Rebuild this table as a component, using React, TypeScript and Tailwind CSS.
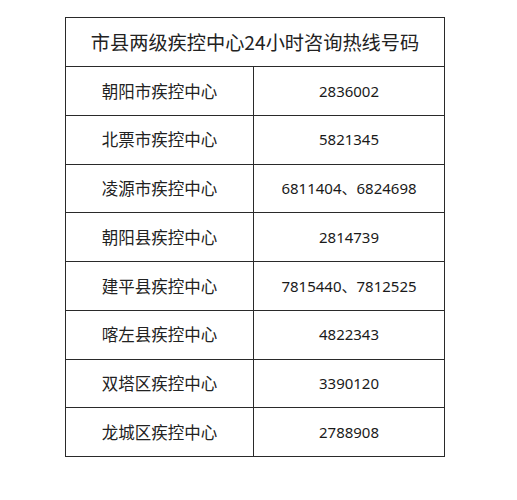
const rows = [
  { name: "朝阳市疾控中心", phone: "2836002" },
  { name: "北票市疾控中心", phone: "5821345" },
  { name: "凌源市疾控中心", phone: "6811404、6824698" },
  { name: "朝阳县疾控中心", phone: "2814739" },
  { name: "建平县疾控中心", phone: "7815440、7812525" },
  { name: "喀左县疾控中心", phone: "4822343" },
  { name: "双塔区疾控中心", phone: "3390120" },
  { name: "龙城区疾控中心", phone: "2788908" },
];

export default function App() {
  return (
    <div className="w-[517px] h-[500px] bg-white pl-[65px] pt-[17px]">
      <div className="w-[380px] border-[1.5px] border-[#2a2a2a] text-[#222]">
        <div
          className="h-[48px] flex items-center justify-center text-[19.2px]"
          style={{ fontFamily: '"Noto Sans CJK SC", sans-serif' }}
        >
          市县两级疾控中心24小时咨询热线号码
        </div>
        {rows.map((r) => (
          <div key={r.name} className="flex h-[48.75px] border-t-[1.5px] border-[#2a2a2a]">
            <div
              className="w-[188px] flex items-center justify-center text-[16.5px] border-r-[1.5px] border-[#2a2a2a]"
              style={{ fontFamily: '"Noto Sans CJK SC", sans-serif' }}
            >
              {r.name}
            </div>
            <div
              className="flex-1 flex items-center justify-center text-[15px] text-[#1a1a1a]"
              style={{ fontFamily: '"Noto Sans", "Noto Sans CJK SC", sans-serif' }}
            >
              {r.phone}
            </div>
          </div>
        ))}
      </div>
    </div>
  );
}
